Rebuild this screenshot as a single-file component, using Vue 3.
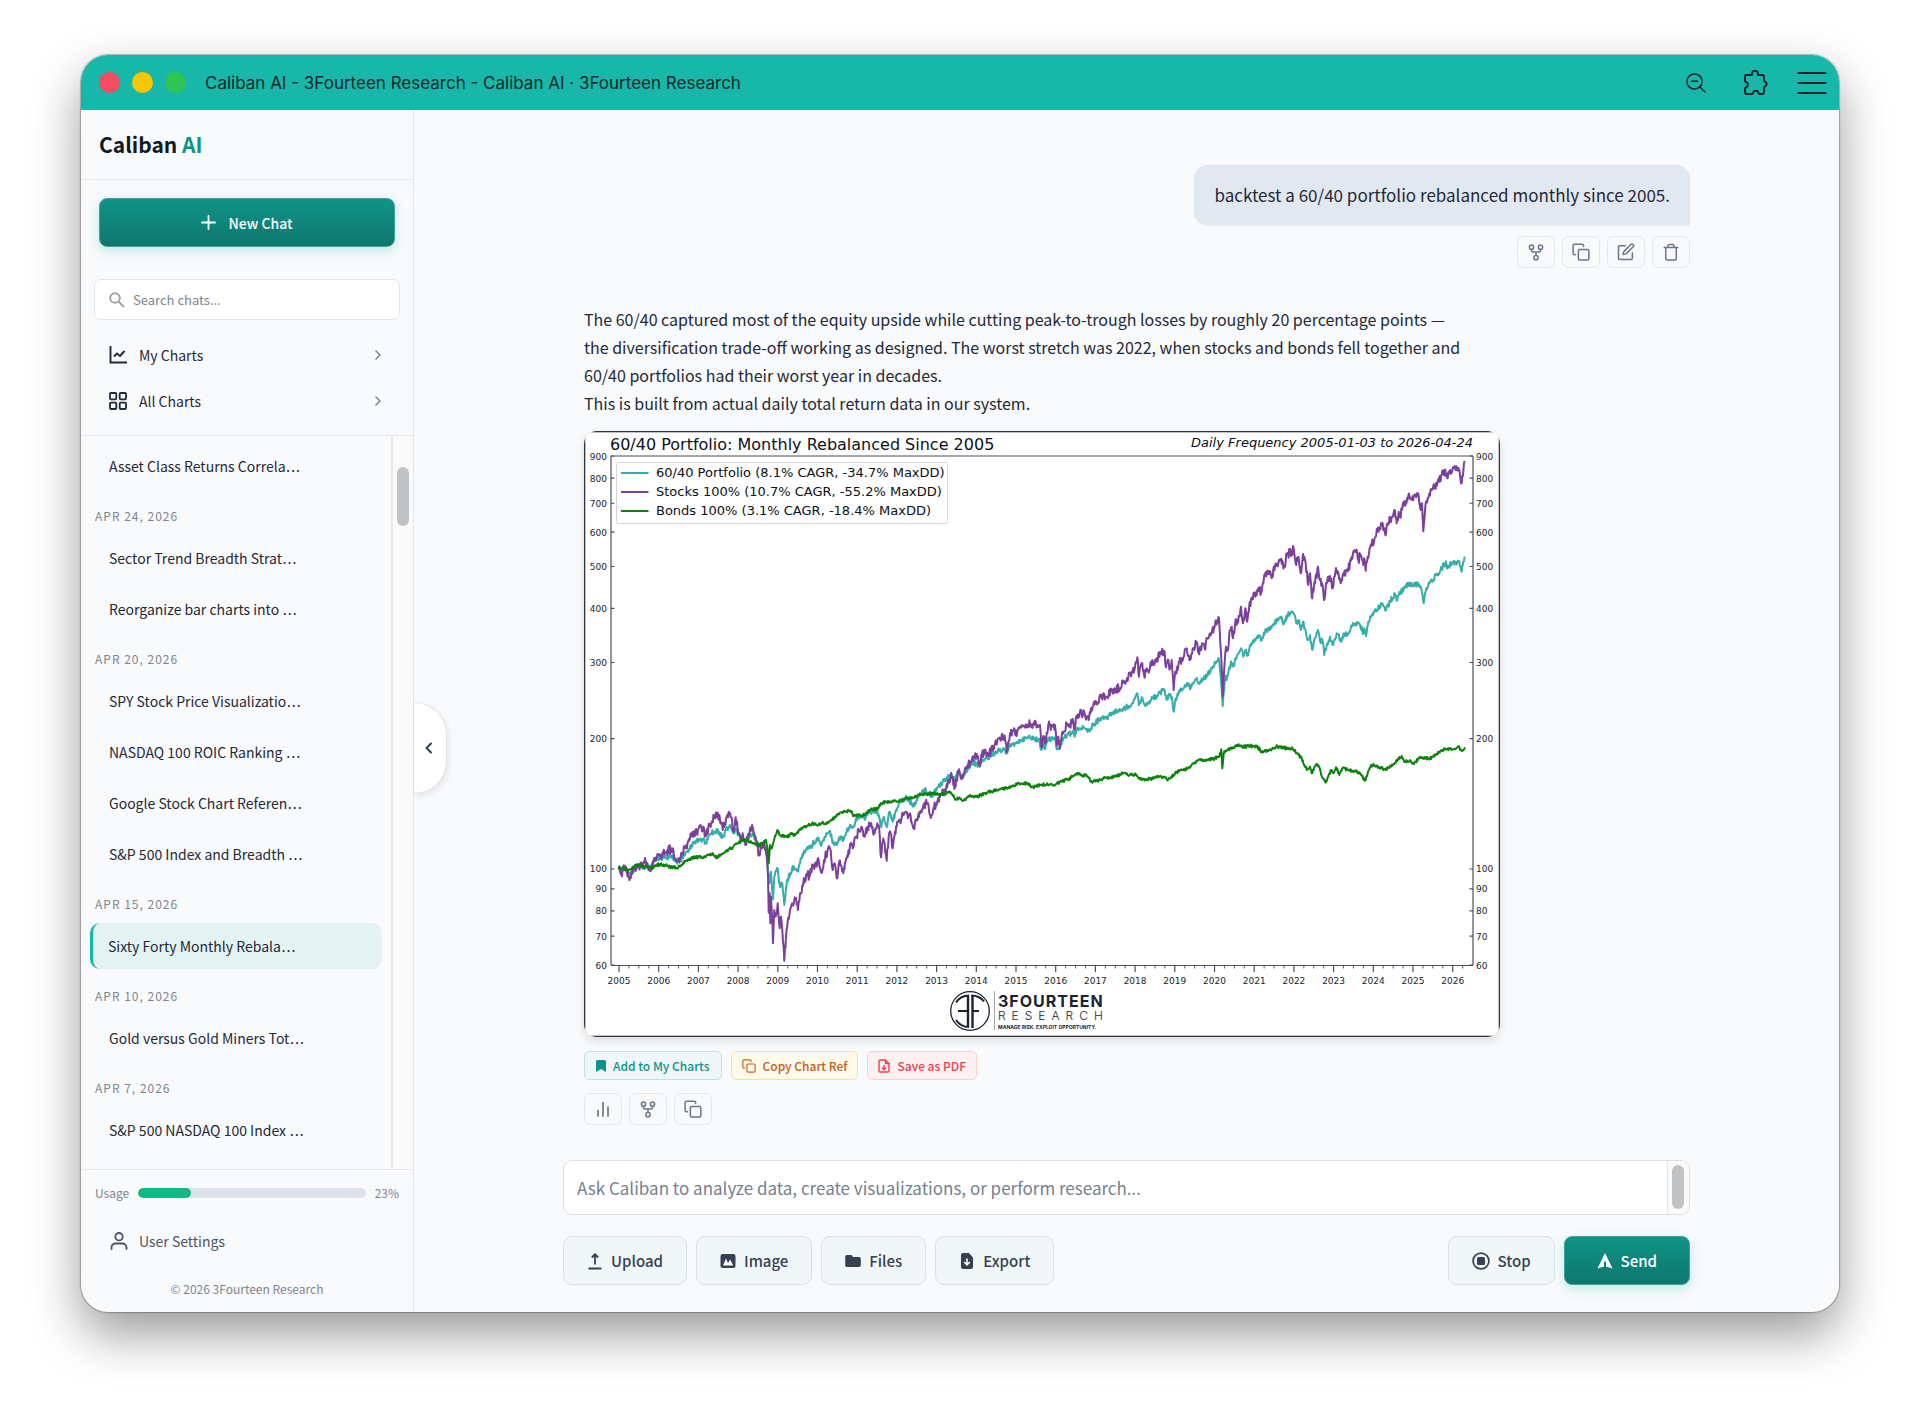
<script setup>
import { ref } from 'vue'

const groups = [
  { date: '', chats: ['Asset Class Returns Correla'] },
  { date: 'Apr 24, 2026', chats: ['Sector Trend Breadth Strat', 'Reorganize bar charts into '] },
  {
    date: 'Apr 20, 2026',
    chats: ['SPY Stock Price Visualizatio', 'NASDAQ 100 ROIC Ranking ', 'Google Stock Chart Referen', 'S&P 500 Index and Breadth ']
  },
  { date: 'Apr 15, 2026', chats: ['Sixty Forty Monthly Rebala'] },
  { date: 'Apr 10, 2026', chats: ['Gold versus Gold Miners Tot'] },
  { date: 'Apr 7, 2026', chats: ['S&P 500 NASDAQ 100 Index '] }
]
const active = ref('Sixty Forty Monthly Rebala')
const usage = 23
const search = ref('')
const draft = ref('')

// Chart geometry, in viewBox units
const plot = { left: 27, right: 889, top: 25, bottom: 534 }
const yOf = (v) => plot.bottom - (Math.log(v / 60) / Math.log(15)) * (plot.bottom - plot.top)
const xOf = (year) => 35 + (year - 2005) * 39.7
const yTicks = [60, 70, 80, 90, 100, 200, 300, 400, 500, 600, 700, 800, 900]
const years = Array.from({ length: 22 }, (_, i) => 2005 + i)
const quarters = Array.from({ length: 86 }, (_, i) => 2005 + i / 4).filter((q) => q % 1)

// Each series is stored as traced sections: an origin and points in thirds of a unit
const section = (ox, oy, text) =>
  text.split(' ').map((p) => {
    const [x, y] = p.split(',').map(Number)
    return [x / 3 + ox, y / 3 + oy]
  })

const stocks = [
  ...section(-14, 299, '146,420 152,432 165,412 182,445 190,420 205,410 222,395 232,400 240,422 252,385 270,375 285,368 305,355 318,392 330,385 345,355 360,325 380,305 400,290 406,318 420,285 432,262 447,255 458,300 468,265 476,245 484,262 490,305 497,262 503,300 512,335 518,310 526,345 536,310 548,292 556,320 567,375 575,340 583,345 590,380 594,440 596,548 599,490 601,580 603,500 606,560 609,640 613,540 617,560 623,520 629,595 633,560 637,600 643,692 648,620 653,575 660,540 668,520 676,505 684,540 690,490 700,460 710,432 718,440 728,410 738,405 746,390 754,428 762,390 772,365 780,355 788,420 794,400 800,445 808,395 820,430 830,385 842,345 848,355 858,320 875,290 884,320 892,290 902,280 914,310 922,280 928,300 933,382 938,335 944,340 950,392 956,320 962,310 968,355 975,305 985,275 995,265 1008,245 1014,265 1020,250 1030,295 1040,270 1050,250 1060,225 1072,220 1084,258 1092,230 1100,225 1112,195 1125,178 1135,150 1145,140 1155,168 1165,125 1178,145 1188,115 1200,100 1212,80 1220,72 1228,105 1236,72 1248,68 1258,70 1270,50 1282,30'),
  ...section(416, 149, '0,475 12,468 22,512 30,460 42,445 50,468 58,445 66,435 90,432 120,435 124,500 130,468 135,490 145,435 158,440 165,435 170,495 175,470 180,505 188,455 200,435 210,432 220,425 224,450 230,408 245,400 262,410 266,420 278,380 295,370 305,345 320,352 335,332 345,328 360,325 370,308 385,292 395,280 405,262 412,232 417,290 425,250 432,285 440,265 448,272 455,245 462,255 470,235 482,222 492,212 498,262 505,240 510,265 515,240 521,330 526,275 535,258 545,235 560,205 572,238 580,205 590,185 596,218 606,190 614,205 622,175 635,155 645,135 657,115 661,190 665,260 668,350 672,280 678,200 684,210 688,160 695,140 699,175 705,135 712,120 718,110 723,80 729,130 736,85 741,125 748,75 757,52 768,40 778,22 783,40 790,10'),
  ...section(456, -141, '675,855 688,850 695,865 705,830 715,820 722,808 732,832 742,790 755,790 761,775 769,825 775,800 782,850 789,792 797,820 805,885 810,850 815,920 825,880 834,830 840,870 846,880 852,930 860,880 870,858 878,895 886,850 892,843 902,880 910,850 925,838 935,800 948,785 955,810 962,795 970,825 974,810 977,842 983,800 992,765 1002,755 1012,725 1025,705 1035,730 1045,700 1055,680 1063,660 1070,700 1076,665 1080,682 1088,645 1098,640 1108,615 1116,630 1125,615 1134,610 1142,660 1146,640 1150,724 1156,650 1165,625 1175,600 1185,590 1195,572 1205,555 1216,540 1223,565 1230,540 1245,533 1256,537 1265,580 1270,545 1274,513')
]
const sixtyForty = [
  ...section(-14, 299, '146,417 165,415 182,430 205,408 240,412 255,388 285,382 305,376 318,395 330,390 345,375 360,350 380,333 400,328 406,340 420,312 432,305 447,305 458,322 468,300 478,290 490,310 497,297 512,320 526,335 548,308 567,350 583,345 590,370 598,460 603,425 606,470 609,508 613,440 623,415 629,465 637,460 643,525 650,460 660,430 672,410 684,425 692,385 710,355 720,355 728,342 746,325 754,347 765,322 780,302 788,340 800,345 808,322 820,330 830,305 842,285 850,290 862,265 880,255 886,265 895,248 910,245 922,240 933,292 940,265 950,292 958,245 968,275 978,240 990,215 1005,205 1015,205 1028,230 1040,210 1055,190 1068,180 1082,200 1092,188 1105,170 1125,152 1144,130 1155,150 1165,125 1178,142 1190,120 1205,98 1225,105 1238,88 1255,85 1270,70 1288,62'),
  ...section(416, 149, '12,505 22,520 30,492 50,490 66,478 90,474 118,478 124,510 130,490 134,508 145,475 165,478 170,508 178,508 190,475 205,463 220,458 224,470 230,445 250,440 266,450 280,435 305,412 320,412 340,396 360,393 385,378 400,365 412,340 417,375 425,352 432,372 450,362 470,348 492,328 500,360 508,345 515,350 521,395 527,355 540,335 560,312 572,325 590,293 598,308 614,295 635,265 657,240 662,290 668,378 674,300 684,285 694,245 700,260 712,225 723,205 730,230 736,210 742,228 750,195 770,175 778,165 783,182 795,155 805,150 820,132 842,115 852,130 862,105 880,98 890,130 897,120 903,150 909,125 918,160 924,180 930,165 936,208 945,175 954,150 962,190 967,180 973,225 982,190 990,170 998,195 1010,160 1022,185 1032,160 1045,162 1055,140 1068,128 1080,135 1090,160 1093,145 1098,168 1105,125 1118,100 1130,90 1148,72 1157,92 1170,65 1185,42 1190,62 1200,40 1215,20 1230,8 1240,20 1254,8 1265,35 1271,70 1277,35 1288,10'),
  ...section(456, -141, '1176,870 1190,855 1205,835 1216,820 1225,832 1235,818 1256,815 1265,845 1270,815 1274,800')
]
const bonds = [
  ...section(-14, 299, '146,417 160,412 175,422 190,410 205,405 225,410 245,413 270,402 300,410 325,412 345,395 370,382 395,382 415,375 430,373 437,383 460,370 475,360 490,350 505,340 520,330 535,332 550,340 565,345 580,340 588,330 592,350 596,400 600,345 605,355 612,330 622,300 630,315 650,320 665,312 672,318 690,300 715,285 730,280 742,287 755,280 775,278 800,258 820,245 842,242 852,258 870,255 885,255 900,240 925,235 932,220 950,215 970,215 1000,208 1030,202 1060,192 1090,190 1115,195 1135,185 1150,195 1157,208 1170,205 1180,212 1195,198 1220,200 1250,188 1280,180'),
  ...section(416, 149, '20,625 35,620 55,608 70,613 80,608 100,622 120,615 140,612 165,615 185,603 205,598 228,582 262,588 272,605 300,600 320,593 345,590 370,580 390,585 408,585 420,597 450,597 480,590 505,598 525,580 545,570 565,565 580,550 600,537 615,540 640,537 658,530 664,508 667,565 671,520 682,510 700,503 712,494 725,500 750,498 772,500 785,515 810,510 828,500 850,502 865,508 878,505 890,520 905,535 915,560 922,568 930,560 935,580 942,565 950,552 960,568 968,595 977,608 988,580 995,570 1000,580 1008,562 1018,585 1027,565 1045,570 1065,573 1080,580 1095,602 1103,580 1115,555 1135,560 1157,570 1172,558 1185,548 1195,535 1205,528 1215,545 1230,540 1242,552 1255,535 1275,535 1290,535 1310,522 1325,510 1350,507 1368,505 1376,498 1384,512 1395,502')
]

// Fill the gaps between traced points with day-to-day jitter from a fixed seed
function jitter(points, amplitude, seed) {
  let s = seed
  const rand = () => {
    s = (s * 16807) % 2147483647
    return s / 2147483647 - 0.5
  }
  const out = []
  for (let i = 0; i < points.length - 1; i++) {
    const [x0, y0] = points[i]
    const [x1, y1] = points[i + 1]
    const n = Math.max(1, Math.round((x1 - x0) / 0.6))
    for (let k = 0; k < n; k++) {
      const t = k / n
      const noise = k ? rand() * 2 * amplitude : 0
      out.push(`${(x0 + (x1 - x0) * t).toFixed(1)},${(y0 + (y1 - y0) * t + noise).toFixed(1)}`)
    }
  }
  out.push(points[points.length - 1].map((n) => n.toFixed(1)).join(','))
  return out.join(' ')
}

const series = [
  { label: '60/40 Portfolio (8.1% CAGR, -34.7% MaxDD)', color: '#35ada8', points: jitter(sixtyForty, 2.8, 71) },
  { label: 'Stocks 100% (10.7% CAGR, -55.2% MaxDD)', color: '#7b3f9c', points: jitter(stocks, 4.5, 1234) },
  { label: 'Bonds 100% (3.1% CAGR, -18.4% MaxDD)', color: '#0b820b', points: jitter(bonds, 1.5, 99) }
]
</script>

<template>
  <svg class="sprite" aria-hidden="true">
    <symbol id="i-fork" viewBox="0 0 24 24">
      <g fill="none" stroke="currentColor" stroke-width="2">
        <circle cx="6" cy="5.500" r="2.800" /><circle cx="18" cy="5.500" r="2.800" /><circle cx="12" cy="19.500" r="2.800" />
        <path d="M6 8.500v1.500q0 2 2 2h8q2 0 2-2V8.500M12 12v4.500" />
      </g>
    </symbol>
    <symbol id="i-copy" viewBox="0 0 24 24">
      <g fill="none" stroke="currentColor" stroke-width="2" stroke-linecap="round" stroke-linejoin="round">
        <rect x="8.500" y="8.500" width="14" height="14" rx="2" />
        <path d="M4.500 15.500h-1a2 2 0 0 1-2-2v-10a2 2 0 0 1 2-2h10a2 2 0 0 1 2 2v1" />
      </g>
    </symbol>
    <symbol id="i-edit" viewBox="0 0 24 24">
      <g fill="none" stroke="currentColor" stroke-width="2" stroke-linecap="round" stroke-linejoin="round">
        <path d="M11 3.500H4a2 2 0 0 0-2 2v14.500a2 2 0 0 0 2 2h14.500a2 2 0 0 0 2-2v-7" />
        <path d="M18.500 2a2.100 2.100 0 0 1 3 3L12 14.500l-4 1 1-4z" />
      </g>
    </symbol>
    <symbol id="i-trash" viewBox="0 0 24 24">
      <path d="M3 6h18M19 6v14.500a2 2 0 0 1-2 2H7a2 2 0 0 1-2-2V6M8 6V4a2 2 0 0 1 2-2h4a2 2 0 0 1 2 2v2" fill="none" stroke="currentColor" stroke-width="2" stroke-linecap="round" stroke-linejoin="round" />
    </symbol>
    <symbol id="i-chevron" viewBox="0 0 8 12">
      <path d="M2 2l4 4-4 4" fill="none" stroke="currentColor" stroke-width="1.600" stroke-linecap="round" stroke-linejoin="round" />
    </symbol>
  </svg>

  <div class="window">
    <header class="titlebar">
      <span class="light red"></span>
      <span class="light yellow"></span>
      <span class="light green"></span>
      <span class="window-title">Caliban AI - 3Fourteen Research - Caliban AI · 3Fourteen Research</span>
      <button class="bar-btn" aria-label="Zoom">
        <svg width="20" height="20" viewBox="0 0 20 20" fill="none" stroke="currentColor" stroke-width="1.500" stroke-linecap="round"><circle cx="8.500" cy="8.500" r="7.600" /><path d="M14 14l5 5M5.500 8.200h6" /></svg>
      </button>
      <button class="bar-btn" aria-label="Extensions">
        <svg width="26" height="26" viewBox="0 0 26 26" fill="none" stroke="currentColor" stroke-width="2" stroke-linejoin="round"><path d="M4 5h5.500c.8 0 .6-.8.600-1.300a2.900 2.900 0 0 1 5.800 0c0 .5-.2 1.300.6 1.300H20c1.200 0 2 .8 2 2v3.500c0 .8.500 1 1 1.200a2.600 2.600 0 0 1 0 4.800c-.5.200-1 .4-1 1.200V22c0 1.200-.8 2-2 2h-2.500c-.9 0-.9-.8-1-1.300a2.900 2.900 0 0 0-5.400 0c-.2.500-.3 1.300-1.100 1.300H5c-1.200 0-2-.8-2-2v-3.300c0-.8.500-1 1.100-1.200a2.900 2.900 0 0 0 0-5.400C3.500 11.900 3 11.600 3 10.800V6c0-.6.400-1 1-1z" /></svg>
      </button>
      <button class="bar-btn" aria-label="Menu">
        <svg width="30" height="24" viewBox="0 0 30 24" stroke="currentColor" stroke-width="2.200" stroke-linecap="round"><path d="M1.500 2h27M1.500 12h27M1.500 22h27" /></svg>
      </button>
    </header>

    <div class="body">
      <aside class="sidebar">
        <h1 class="brand">Caliban <span>AI</span></h1>
        <div class="side-top">
          <button class="primary new-chat">
            <svg width="15" height="15" viewBox="0 0 15 15" stroke="currentColor" stroke-width="1.800" stroke-linecap="round"><path d="M7.500 1v13M1 7.500h13" /></svg>
            New Chat
          </button>
          <label class="search">
            <svg width="16" height="16" viewBox="0 0 16 16" fill="none" stroke="currentColor" stroke-width="1.900"><circle cx="6" cy="6" r="4.800" /><path d="M9.500 9.500l5.500 5.500" /></svg>
            <input v-model="search" type="text" placeholder="Search chats..." aria-label="Search chats" />
          </label>
          <nav class="links">
            <a href="#my">
              <svg width="18" height="18" viewBox="0 0 18 18" fill="none" stroke="currentColor" stroke-width="1.900"><path d="M1.500 0v16.500H18M5 10.500l3-3 3 2.500 4.500-5" /></svg>
              My Charts
              <svg class="go" width="8" height="12"><use href="#i-chevron" /></svg>
            </a>
            <a href="#all">
              <svg width="18" height="18" viewBox="0 0 18 18" fill="none" stroke="currentColor" stroke-width="1.800"><rect x="1" y="1" width="6.300" height="6.300" rx="1" /><rect x="10.700" y="1" width="6.300" height="6.300" rx="1" /><rect x="1" y="10.700" width="6.300" height="6.300" rx="1" /><rect x="10.700" y="10.700" width="6.300" height="6.300" rx="1" /></svg>
              All Charts
              <svg class="go" width="8" height="12"><use href="#i-chevron" /></svg>
            </a>
          </nav>
        </div>

        <div class="history">
          <div class="history-list">
            <section v-for="g in groups" :key="g.date">
              <h2 v-if="g.date">{{ g.date }}</h2>
              <button v-for="c in g.chats" :key="c" class="chat" :class="{ active: c === active }" @click="active = c">{{ c }}<span class="more">…</span></button>
            </section>
          </div>
          <div class="track"><span class="thumb"></span></div>
        </div>

        <footer class="side-foot">
          <div class="usage">
            <span>Usage</span>
            <div class="meter" role="meter" :aria-valuenow="usage" aria-valuemin="0" aria-valuemax="100" aria-label="Usage">
              <div class="fill" :style="{ width: usage + '%' }"></div>
            </div>
            <span>{{ usage }}%</span>
          </div>
          <a class="settings" href="#settings">
            <svg width="18" height="18" viewBox="0 0 18 18" fill="none" stroke="currentColor" stroke-width="1.800" stroke-linecap="round"><circle cx="9" cy="4.700" r="3.700" /><path d="M1.500 17v-1.500a4 4 0 0 1 4-4h7a4 4 0 0 1 4 4V17" /></svg>
            User Settings
          </a>
          <p class="copyright">© 2026 3Fourteen Research</p>
        </footer>
      </aside>

      <main class="main">
        <button class="collapse" aria-label="Collapse sidebar">
          <svg width="10" height="14" viewBox="0 0 10 14" fill="none" stroke="currentColor" stroke-width="2" stroke-linecap="round" stroke-linejoin="round"><path d="M7 2.500L2.500 7 7 11.500" /></svg>
        </button>

        <div class="column">
          <div class="thread">
            <div class="user">
              <p class="bubble">backtest a 60/40 portfolio rebalanced monthly since 2005.</p>
              <div class="icon-row">
                <button class="icon-btn" aria-label="Branch"><svg width="18" height="18"><use href="#i-fork" /></svg></button>
                <button class="icon-btn" aria-label="Copy"><svg width="18" height="18"><use href="#i-copy" /></svg></button>
                <button class="icon-btn" aria-label="Edit"><svg width="18" height="18"><use href="#i-edit" /></svg></button>
                <button class="icon-btn" aria-label="Delete"><svg width="18" height="18"><use href="#i-trash" /></svg></button>
              </div>
            </div>

            <article class="reply">
              <p>The 60/40 captured most of the equity upside while cutting peak-to-trough losses by roughly 20 percentage points — the diversification trade-off working as designed. The worst stretch was 2022, when stocks and bonds fell together and 60/40 portfolios had their worst year in decades.</p>
              <p>This is built from actual daily total return data in our system.</p>

              <figure class="chart">
                <svg viewBox="0 0 916 606" role="img" aria-label="60/40 Portfolio: Monthly Rebalanced Since 2005">
                  <rect x="0.500" y="0.500" width="915" height="605" fill="#fff" stroke="#30343c" stroke-width="1.600" />
                  <text x="26" y="19" class="c-title">60/40 Portfolio: Monthly Rebalanced Since 2005</text>
                  <text x="889" y="16" text-anchor="end" class="c-sub">Daily Frequency 2005-01-03 to 2026-04-24</text>

                  <g fill="none" stroke="#4a505c" stroke-width="1.200">
                    <path :d="`M${plot.left} ${plot.bottom}V${plot.top}H${plot.right}`" />
                    <path :d="`M${plot.left} ${plot.bottom + 0.5}H${plot.right}`" />
                    <path :d="`M${plot.right} ${plot.top}V${plot.bottom}`" />
                    <path v-for="v in yTicks" :key="v" :d="`M${plot.left} ${yOf(v)}h3.500M${plot.right} ${yOf(v)}h-3.500`" />
                    <path v-for="q in quarters" :key="q" :d="`M${xOf(q)} ${plot.bottom}v3.500`" stroke-width="0.900" />
                    <path v-for="y in years" :key="y" :d="`M${xOf(y)} ${plot.bottom}v7`" />
                  </g>
                  <g class="c-axis">
                    <text v-for="v in yTicks" :key="v" x="23" :y="yOf(v) + 3.5" text-anchor="end">{{ v }}</text>
                    <text v-for="v in yTicks" :key="-v" x="892" :y="yOf(v) + 3.5">{{ v }}</text>
                    <text v-for="y in years" :key="y" :x="xOf(y)" y="553" text-anchor="middle">{{ y }}</text>
                  </g>

                  <polyline v-for="s in series" :key="s.label" :points="s.points" fill="none" :stroke="s.color" stroke-width="2" stroke-linejoin="round" />

                  <rect x="32.500" y="31.500" width="331" height="61" rx="2" fill="#fff" stroke="#d4d6d9" />
                  <g v-for="(s, i) in series" :key="s.color">
                    <path :d="`M37 ${42 + i * 19}h27.500`" :stroke="s.color" stroke-width="2" />
                    <text x="72" :y="46 + i * 19" class="c-legend">{{ s.label }}</text>
                  </g>

                  <g fill="none" stroke="#1c2230">
                    <circle cx="386" cy="580" r="19.300" stroke-width="1.300" />
                    <path d="M384 564v32M388.500 597v-33" stroke-width="2.400" />
                    <path d="M385 564.500c-6 0-10 2.500-13 7M385 596c-6 0-10-2.500-13-7M387.500 564.500c6 0 9.500 2 12.500 6M374 580h10M388 580h7" stroke-width="2" />
                    <path d="M410.500 560v39" stroke="#a5a8ad" stroke-width="1" />
                  </g>
                  <g class="c-logo">
                    <text x="414" y="576" class="l1">3FOURTEEN</text>
                    <text x="414" y="589" class="l2">RESEARCH</text>
                    <text x="414" y="598" class="l3">MANAGE RISK. EXPLOIT OPPORTUNITY.</text>
                  </g>
                </svg>
              </figure>

              <div class="chips">
                <button class="chip teal">
                  <svg width="10" height="12" viewBox="0 0 10 12"><path d="M1.500 0h7A1.500 1.500 0 0 1 10 1.500V12L5 9l-5 3V1.500A1.500 1.500 0 0 1 1.500 0z" fill="currentColor" /></svg>
                  Add to My Charts
                </button>
                <button class="chip amber"><svg width="14" height="14"><use href="#i-copy" /></svg>Copy Chart Ref</button>
                <button class="chip rose">
                  <svg width="12" height="14" viewBox="0 0 12 14" fill="none" stroke="currentColor" stroke-width="1.400" stroke-linejoin="round" stroke-linecap="round"><path d="M7.500 1H2a1 1 0 0 0-1 1v10a1 1 0 0 0 1 1h8a1 1 0 0 0 1-1V4.500zM7.500 1v3.500H11M6 6.500v4M4.300 9L6 10.700 7.700 9" /></svg>
                  Save as PDF
                </button>
              </div>
              <div class="icon-row">
                <button class="icon-btn" aria-label="Chart"><svg width="16" height="16" viewBox="0 0 16 16" stroke="currentColor" stroke-width="1.700" stroke-linecap="round"><path d="M3 9.500V15M8 1.500V15M13 6V15" /></svg></button>
                <button class="icon-btn" aria-label="Branch"><svg width="18" height="18"><use href="#i-fork" /></svg></button>
                <button class="icon-btn" aria-label="Copy"><svg width="18" height="18"><use href="#i-copy" /></svg></button>
              </div>
            </article>
          </div>

          <form class="composer" @submit.prevent>
            <div class="prompt">
              <textarea v-model="draft" rows="1" placeholder="Ask Caliban to analyze data, create visualizations, or perform research..." aria-label="Message"></textarea>
              <div class="track small"><span class="thumb"></span></div>
            </div>
            <div class="tools">
              <button type="button" class="tool">
                <svg width="16" height="18" viewBox="0 0 16 18" fill="none" stroke="currentColor" stroke-width="1.800"><path d="M8 12.500V2.500M4.800 5.500L8 2.300l3.200 3.200M1.500 16.500h13" /></svg>
                Upload
              </button>
              <button type="button" class="tool">
                <svg width="16" height="16" viewBox="0 0 16 16"><rect x="0.500" y="1" width="15" height="14" rx="2" fill="currentColor" /><path d="M3 12.500L6 5.500l2 4.500 2.200-3.500 3 6z" fill="#fff" /></svg>
                Image
              </button>
              <button type="button" class="tool">
                <svg width="16" height="16" viewBox="0 0 16 16"><path d="M2 2h4.500L8 4h6a1.800 1.800 0 0 1 1.800 1.800v6.400A1.800 1.800 0 0 1 14 14H2A1.800 1.800 0 0 1 .2 12.200V3.800A1.800 1.800 0 0 1 2 2z" fill="currentColor" /></svg>
                Files
              </button>
              <button type="button" class="tool">
                <svg width="16" height="16" viewBox="0 0 16 16"><path d="M4 0h6l4 4.500V14a2 2 0 0 1-2 2H4a2 2 0 0 1-2-2V2a2 2 0 0 1 2-2z" fill="currentColor" /><path d="M8 5.500v6M5.200 9L8 11.800 10.800 9" fill="none" stroke="#fff" stroke-width="1.600" /></svg>
                Export
              </button>
              <button type="button" class="tool stop">
                <svg width="18" height="18" viewBox="0 0 18 18"><circle cx="9" cy="9" r="7.900" fill="none" stroke="currentColor" stroke-width="1.700" /><rect x="5" y="5" width="8" height="8" rx="1.500" fill="currentColor" /></svg>
                Stop
              </button>
              <button type="submit" class="primary send">
                <svg width="16" height="16" viewBox="0 0 16 16"><path d="M8 0L15.500 15.500 9 13.500V8.500H7V13.500L.5 15.500z" fill="currentColor" /></svg>
                Send
              </button>
            </div>
          </form>
        </div>
      </main>
    </div>
  </div>
</template>

<style>
body {
  background: #fff;
}
</style>

<style scoped>
* {
  box-sizing: border-box;
}
button,
input,
textarea {
  font: inherit;
  color: inherit;
  margin: 0;
}
button {
  cursor: pointer;
}
h1,
h2,
p,
figure {
  margin: 0;
}
svg {
  display: block;
  flex: none;
}
.sprite {
  position: absolute;
  width: 0;
  height: 0;
}
.window {
  display: flex;
  flex-direction: column;
  margin: 55px 81px 107px;
  min-height: calc(100vh - 162px);
  border-radius: 27px;
  overflow: hidden;
  background: #f9fafc;
  color: #1f2937;
  font-family: "Noto Sans CJK SC", "Noto Sans", sans-serif;
  font-size: 14px;
  line-height: 20px;
  box-shadow: 0 0 1px 1px rgba(0, 0, 0, 0.25), 0 22px 50px rgba(0, 0, 0, 0.4);
}
.titlebar {
  display: flex;
  align-items: center;
  height: 55px;
  padding: 0 12px 0 18px;
  background: #17b8a9;
  color: #15252c;
}
.light {
  width: 21px;
  height: 21px;
  margin-right: 12px;
  border-radius: 50%;
}
.red {
  background: #f64b60;
}
.yellow {
  background: #f9c602;
}
.green {
  background: #2fc553;
}
.window-title {
  flex: 1;
  margin-left: 7px;
  font-family: Inter, sans-serif;
  font-size: 17px;
}
.bar-btn {
  display: flex;
  padding: 0;
  border: 0;
  background: none;
  margin-left: 30px;
}
.bar-btn + .bar-btn {
  margin-left: 36px;
}
.bar-btn:last-child {
  margin-left: 29px;
}
.body {
  display: flex;
  flex: 1;
}
.sidebar {
  display: flex;
  flex-direction: column;
  flex: none;
  width: 333px;
  border-right: 1px solid #e2e5ea;
}
.brand {
  height: 70px;
  padding: 0 18px;
  border-bottom: 1px solid #e5e7eb;
  font-size: 21px;
  line-height: 68px;
  font-weight: 700;
  color: #111827;
}
.brand span {
  color: #0d9488;
}
.primary {
  display: flex;
  align-items: center;
  justify-content: center;
  border: 1px solid #3fa69b;
  border-radius: 8px;
  background: linear-gradient(#0f9486, #0f766e);
  color: #fff;
  font-weight: 500;
  box-shadow: 0 4px 12px rgba(20, 184, 166, 0.25);
}
.side-top {
  padding: 18px 13px 11px;
  border-bottom: 1px solid #e2e5ea;
}
.new-chat {
  width: calc(100% - 10px);
  height: 49px;
  margin: 0 5px;
  gap: 12px;
}
.search {
  display: flex;
  align-items: center;
  gap: 8px;
  height: 41px;
  margin-top: 32px;
  padding: 0 14px;
  border: 1px solid #e2e5ea;
  border-radius: 7px;
  background: #fff;
  color: #9ca3af;
}
.search input {
  flex: 1;
  min-width: 0;
  padding: 0;
  border: 0;
  outline: 0;
  background: none;
  color: #1f2937;
  font-size: 13px;
}
.search input::placeholder {
  color: #7d8592;
}
.links {
  margin-top: 12px;
}
.links a {
  display: flex;
  align-items: center;
  gap: 12px;
  height: 46px;
  padding: 0 18px 0 15px;
  color: #1f2937;
  text-decoration: none;
}
.links .go {
  margin-left: auto;
  color: #7d8592;
}
.history {
  display: flex;
  flex: 1 1 0;
  min-height: 0;
  overflow: hidden;
}
.history-list {
  flex: 1;
  min-width: 0;
  padding: 7px 9px 0;
}
.history h2 {
  height: 41px;
  padding: 12px 5px 10px;
  font-size: 12px;
  line-height: 19px;
  font-weight: 400;
  letter-spacing: 1px;
  text-transform: uppercase;
  color: #7d8592;
}
.chat {
  display: block;
  width: 100%;
  height: 46px;
  margin-bottom: 5px;
  padding: 0 15px 0 19px;
  border: 0;
  border-radius: 10px;
  background: none;
  text-align: left;
  white-space: pre;
}
.chat.active {
  padding-left: 15px;
  border-left: 3px solid #14b8a6;
  background: #e3f3f1;
}
.more {
  font-family: "DejaVu Sans", sans-serif;
  font-size: 15px;
}
.track {
  flex: none;
  width: 22px;
  padding: 31px 4px;
  border-left: 2px solid #e7e8ea;
  background: #fafafa;
}
.thumb {
  display: block;
  width: 12px;
  height: 59px;
  border-radius: 6px;
  background: #c0c3c6;
}
.side-foot {
  padding: 0 14px;
  border-top: 1px solid #e5e7eb;
  color: #7d8592;
}
.usage {
  display: flex;
  align-items: center;
  gap: 9px;
  height: 46px;
  font-size: 12px;
}
.meter {
  flex: 1;
  height: 10px;
  border-radius: 5px;
  background: #dde3eb;
  overflow: hidden;
}
.fill {
  height: 100%;
  border-radius: 5px;
  background: #10b981;
}
.settings {
  display: flex;
  align-items: center;
  gap: 11px;
  height: 50px;
  padding-left: 15px;
  color: #4b5563;
  text-decoration: none;
}
.copyright {
  padding: 14px 0;
  font-size: 12px;
  line-height: 18px;
  text-align: center;
}
.main {
  position: relative;
  display: flex;
  flex: 1;
  min-width: 0;
  justify-content: center;
}
.collapse {
  position: absolute;
  left: 0;
  top: 592px;
  display: flex;
  align-items: center;
  width: 33px;
  height: 92px;
  padding: 0 0 0 10px;
  border: 1px solid #e2e5ea;
  border-left: 0;
  border-radius: 0 33px 33px 0;
  background: #fff;
  color: #374151;
  box-shadow: 2px 3px 6px rgba(0, 0, 0, 0.08);
}
.column {
  display: flex;
  flex-direction: column;
  justify-content: space-between;
  width: 100%;
  max-width: 1127px;
  padding: 55px 0 27px;
}
.user {
  display: flex;
  flex-direction: column;
  align-items: flex-end;
}
.bubble {
  padding: 16px 20px;
  border-radius: 14px 14px 2px 14px;
  background: #e2e8f0;
  font-size: 17px;
  line-height: 28px;
  box-shadow: 0 1px 2px rgba(0, 0, 0, 0.06);
}
.icon-row {
  display: flex;
  gap: 7px;
  margin-top: 11px;
}
.icon-btn {
  display: flex;
  align-items: center;
  justify-content: center;
  width: 38px;
  height: 32px;
  padding: 0;
  border: 1px solid #e2e7ee;
  border-radius: 7px;
  background: none;
  color: #6b7789;
}
.reply {
  max-width: 937px;
  margin-top: 37px;
  padding-left: 21px;
}
.reply p {
  max-width: 884px;
  font-size: 16px;
  line-height: 28px;
}
.chart {
  margin-top: 14px;
  border-radius: 13px;
  overflow: hidden;
  background: #fff;
  box-shadow: 0 4px 10px rgba(0, 0, 0, 0.12);
}
.chart svg {
  width: 100%;
}
.chart text {
  font-family: "DejaVu Sans", sans-serif;
  fill: #0c1018;
}
.chart .c-title {
  font-size: 16px;
}
.chart .c-sub {
  font-size: 13px;
  font-style: italic;
}
.chart .c-legend {
  font-size: 13px;
}
.chart .c-axis text {
  font-size: 9px;
  fill: #20242e;
}
.chart .c-logo text {
  font-family: Inter, sans-serif;
  fill: #1c2230;
}
.chart .c-logo .l1 {
  font-size: 16px;
  font-weight: 700;
  letter-spacing: 1px;
}
.chart .c-logo .l2 {
  font-size: 12px;
  font-weight: 300;
  letter-spacing: 6px;
}
.chart .c-logo .l3 {
  font-size: 5px;
  font-weight: 700;
}
.chips {
  display: flex;
  gap: 9px;
  margin-top: 14px;
}
.chip {
  display: flex;
  align-items: center;
  gap: 7px;
  height: 29px;
  padding: 0 10px;
  border: 1px solid;
  border-radius: 5px;
  font-size: 12px;
  font-weight: 500;
}
.chip.teal {
  padding: 0 11px;
  border-color: #b9e6df;
  background: #f1f7f9;
  color: #0d9488;
}
.chip.amber {
  border-color: #fbe29a;
  background: #fffbeb;
  color: #c2601c;
}
.chip.rose {
  border-color: #fbcfd2;
  background: #fef1f2;
  color: #ee4050;
}
.reply .icon-row {
  margin-top: 13px;
}
.prompt {
  display: flex;
  height: 55px;
  border: 1px solid #d9e0e8;
  border-radius: 9px;
  background: #fff;
  overflow: hidden;
}
.prompt textarea {
  flex: 1;
  padding: 13px;
  border: 0;
  outline: 0;
  resize: none;
  background: none;
  font-size: 17px;
  line-height: 28px;
  overflow: hidden;
}
.prompt textarea::placeholder {
  color: #76808f;
}
.track.small {
  padding: 4px;
  border-left-width: 1px;
}
.small .thumb {
  height: 44px;
}
.tools {
  display: flex;
  gap: 9px;
  margin-top: 21px;
}
.tool {
  display: flex;
  align-items: center;
  gap: 8px;
  height: 49px;
  padding: 0 23px;
  border: 1px solid #dbe1e8;
  border-radius: 9px;
  background: #f1f6f9;
  color: #374151;
  font-size: 15px;
  font-weight: 500;
}
.stop {
  margin-left: auto;
}
.send {
  gap: 8px;
  padding: 0 32px;
  font-size: 15px;
}
</style>
